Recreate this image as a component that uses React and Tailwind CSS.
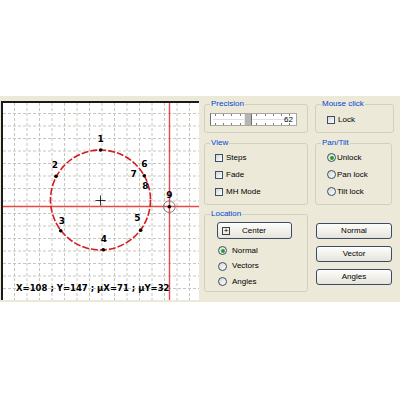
import React from "react";

const points = [
  { n: "1", x: 100.7, y: 150, lx: 100.7, ly: 138.5 },
  { n: "2", x: 56, y: 176.3, lx: 55, ly: 165 },
  { n: "3", x: 60.7, y: 230.7, lx: 62, ly: 220.7 },
  { n: "4", x: 103.3, y: 249.7, lx: 104, ly: 239 },
  { n: "5", x: 140.7, y: 230.3, lx: 137.3, ly: 218.3 },
  { n: "6", x: 144.3, y: 175.7, lx: 144.3, ly: 164 },
];

const Plot = () => {
  const vlines = Array.from({ length: 15 }, (_, i) => 14.5 + i * 12.5);
  const hlines = Array.from({ length: 15 }, (_, i) => 113.5 + i * 12.5);
  return (
    <div className="w-[198px] h-[199px] bg-[#1a1a1a] pt-[2px] pl-[2px]">
      <svg width="196" height="197" viewBox="3 103 196 197" className="block bg-white">
        {vlines.map((x) => (
          <line key={"v" + x} x1={x} y1="103" x2={x} y2="300" stroke="#c6c6c0" strokeWidth="1" strokeDasharray="3 2" />
        ))}
        {hlines.map((y) => (
          <line key={"h" + y} x1="3" y1={y} x2="199" y2={y} stroke="#c6c6c0" strokeWidth="1" strokeDasharray="3 2" />
        ))}
        <line x1="3" y1="206.5" x2="199" y2="206.5" stroke="#e84848" strokeWidth="1.4" />
        <line x1="169.5" y1="103" x2="169.5" y2="300" stroke="#e84848" strokeWidth="1.4" />
        <circle cx="100.5" cy="200" r="50" fill="none" stroke="#d41c1c" strokeWidth="1.6" strokeDasharray="7 2" />
        <line x1="95.5" y1="200.5" x2="105.5" y2="200.5" stroke="#000" strokeWidth="0.8" />
        <line x1="100.5" y1="195.5" x2="100.5" y2="205.5" stroke="#000" strokeWidth="0.8" />
        <circle cx="169.3" cy="206.7" r="5.8" fill="none" stroke="#7a7a7a" strokeWidth="1" />
        <circle cx="169.3" cy="206.7" r="1.8" fill="#000" />
        <g fontFamily="'DejaVu Sans', sans-serif" fontWeight="bold" fontSize="9" textAnchor="middle" dominantBaseline="central" fill="#000">
          {points.map((p) => (
            <g key={p.n}>
              <circle cx={p.x} cy={p.y} r="1.8" fill="#000" />
              <text x={p.lx} y={p.ly}>{p.n}</text>
            </g>
          ))}
          <text x="133.7" y="174.3">7</text>
          <text x="145.3" y="186.3">8</text>
          <text x="169.3" y="195">9</text>
        </g>
        <text x="16" y="291" fontFamily="'DejaVu Sans', sans-serif" fontWeight="bold" fontSize="8.5" fill="#000">
          X=108 ; Y=147 ; µX=71 ; µY=32
        </text>
      </svg>
    </div>
  );
};

const Group = ({ title, className, children }) => (
  <fieldset className={"border border-[#d0d0bf] rounded-[3px] " + className}>
    <legend className="ml-[5px] px-[1px] leading-[10px] text-[#0046d5]">{title}</legend>
    {children}
  </fieldset>
);

const Check = ({ label, className }) => (
  <div className={"flex items-center " + className}>
    <span className="w-[8px] h-[8px] border border-[#35506e] bg-linear-to-br from-[#d6d6cf] to-white" />
    <span className="ml-[3px]">{label}</span>
  </div>
);

const Radio = ({ label, on, gap, className }) => (
  <div className={"flex items-center " + className}>
    <span className="w-[9px] h-[9px] rounded-full border border-[#35506e] bg-linear-to-br from-[#d6d6cf] to-white flex items-center justify-center">
      {on && <span className="w-[4px] h-[4px] rounded-full bg-[#21a121]" />}
    </span>
    <span className={gap}>{label}</span>
  </div>
);

const Button = ({ children, className }) => (
  <div className={"h-[16px] rounded-[3px] border border-[#3a4d68] bg-linear-to-b from-[#fdfdfb] to-[#e6e4da] flex items-center justify-center " + className}>
    {children}
  </div>
);

const Slider = () => (
  <div className="relative w-[87px] h-[13px] bg-white border border-[#a8a8a0] border-l-[#707070] flex items-center justify-end pr-[3px]">
    <svg width="85" height="11" viewBox="0 0 85 11" className="absolute left-0 top-0">
      {[4, 12, 20, 29, 37, 45, 54, 62, 70, 78].map((x) => (
        <g key={x}>
          <line x1={x + 0.5} y1="0" x2={x + 0.5} y2="2" stroke="#808080" strokeWidth="1" />
          <line x1={x + 0.5} y1="9" x2={x + 0.5} y2="11" stroke="#808080" strokeWidth="1" />
        </g>
      ))}
      <line x1="2" y1="5.5" x2="76" y2="5.5" stroke="#e0e0e0" strokeWidth="1" />
      <rect x="33" y="0" width="8" height="11" fill="#b4b4b0" />
      <rect x="40" y="0" width="1" height="11" fill="#6e6e6e" />
      <rect x="33" y="0" width="1" height="11" fill="#e8e8e8" />
    </svg>
    <span className="relative leading-[10px]">62</span>
  </div>
);

export default function App() {
  return (
    <div className="w-[400px] h-[400px] pt-[96px] bg-white text-[8px] text-black font-['Liberation_Sans',Arial,sans-serif]">
      <div className="h-[206px] bg-[#ECE9D8] flex">
        <div className="w-[200px] pt-[5px] pl-[1px]">
          <Plot />
        </div>
        <div className="w-[200px] pl-[4px] pt-[3px] flex flex-col">
          <div className="flex gap-[7px] h-[34px]">
            <Group title="Precision" className="w-[104px] h-[34px]">
              <div className="pl-[5px] pt-[4px]">
                <Slider />
              </div>
            </Group>
            <Group title="Mouse click" className="w-[79px] h-[34px]">
              <Check label="Lock" className="pl-[11px] pt-[5px]" />
            </Group>
          </div>
          <div className="flex gap-[7px] h-[67px] mt-[5px]">
            <Group title="View" className="w-[104px] h-[67px]">
              <div className="flex flex-col pl-[10px] pt-[1px]">
                <Check label="Steps" className="h-[17px]" />
                <Check label="Fade" className="h-[17px]" />
                <Check label="MH Mode" className="h-[17px]" />
              </div>
            </Group>
            <Group title="Pan/Tilt" className="w-[77px] h-[67px]">
              <div className="flex flex-col pl-[11px] pt-[1px]">
                <Radio label="Unlock" on gap="ml-[1px]" className="h-[17px]" />
                <Radio label="Pan lock" gap="ml-[1px]" className="h-[17px]" />
                <Radio label="Tilt lock" gap="ml-[1px]" className="h-[17px]" />
              </div>
            </Group>
          </div>
          <div className="flex gap-[7px] h-[83px] mt-[4px]">
            <Group title="Location" className="w-[104px] h-[83px]">
              <div className="pl-[12px] pt-[3px]">
                <Button className="w-[75px] h-[17px] justify-start">
                  <span className="ml-[4px] w-[8px] h-[8px] border border-[#404040] flex items-center justify-center leading-none text-[8px]">+</span>
                  <span className="ml-[12px]">Center</span>
                </Button>
              </div>
              <div className="flex flex-col pl-[13px] mt-[4px]">
                <Radio label="Normal" on gap="ml-[5px]" className="h-[15.5px]" />
                <Radio label="Vectors" gap="ml-[5px]" className="h-[15.5px]" />
                <Radio label="Angles" gap="ml-[5px]" className="h-[15.5px]" />
              </div>
            </Group>
            <div className="w-[79px] pl-[1px] pt-[14px] flex flex-col gap-[7px]">
              <Button className="w-[76px]">Normal</Button>
              <Button className="w-[76px]">Vector</Button>
              <Button className="w-[76px]">Angles</Button>
            </div>
          </div>
        </div>
      </div>
    </div>
  );
}
